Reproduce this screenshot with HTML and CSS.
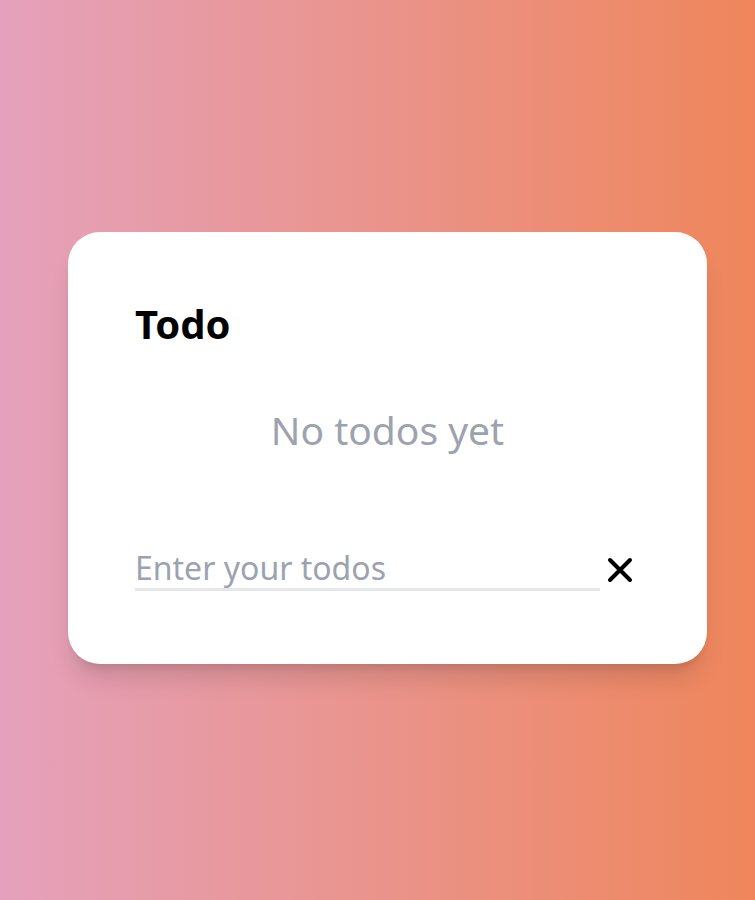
FILE: index.html
```html
<!DOCTYPE html>
<html lang="en">
<head>
<meta charset="utf-8">
<title>Todo</title>
<link rel="stylesheet" href="styles.css">
</head>
<body>
<main class="page">
  <section class="card">
    <h1 class="title">Todo</h1>
    <p class="empty">No todos yet</p>
    <form class="entry">
      <input class="entry-input" type="text" placeholder="Enter your todos">
      <button class="entry-btn" type="button" aria-label="Clear">
        <svg width="26" height="26" viewBox="0 0 26 26" fill="none" stroke="#000" stroke-width="4" stroke-linecap="round">
          <path d="M3 3 L23 23 M23 3 L3 23"/>
        </svg>
      </button>
    </form>
  </section>
</main>
</body>
</html>
```
FILE: styles.css
```css
* { box-sizing: border-box; }
html, body { margin: 0; height: 100%; }
body {
  font-family: "Noto Sans", "Open Sans", sans-serif;
  background: linear-gradient(to right, #e5a1bc, #ef865b);
}
.page {
  height: 100%;
  display: flex;
  align-items: center;
  padding: 0 0 4px 68px;
}
.card {
  width: 639px;
  height: 432px;
  background: #fff;
  border-radius: 32px;
  box-shadow: 0 20px 25px -5px rgba(0,0,0,.12), 0 8px 10px -6px rgba(0,0,0,.12);
  padding: 64px 67px 0;
  display: flex;
  flex-direction: column;
}
.title {
  margin: 0;
  font-size: 40px;
  font-weight: 700;
  line-height: 56px;
  color: #000;
}
.empty {
  margin: 54px 0 0;
  text-align: center;
  font-size: 39px;
  line-height: 48px;
  color: #9ca3af;
}
.entry {
  margin-top: 94px;
  display: flex;
  align-items: center;
}
.entry-input {
  flex: 1;
  border: 0;
  border-bottom: 3px solid #e5e7eb;
  outline: none;
  font-family: inherit;
  font-size: 32px;
  line-height: 40px;
  padding: 0;
  color: #111;
  background: transparent;
}
.entry-input::placeholder { color: #9ca3af; }
.entry-btn {
  width: 40px;
  height: 40px;
  border: 0;
  background: transparent;
  padding: 0;
  display: flex;
  align-items: center;
  justify-content: center;
}
```
